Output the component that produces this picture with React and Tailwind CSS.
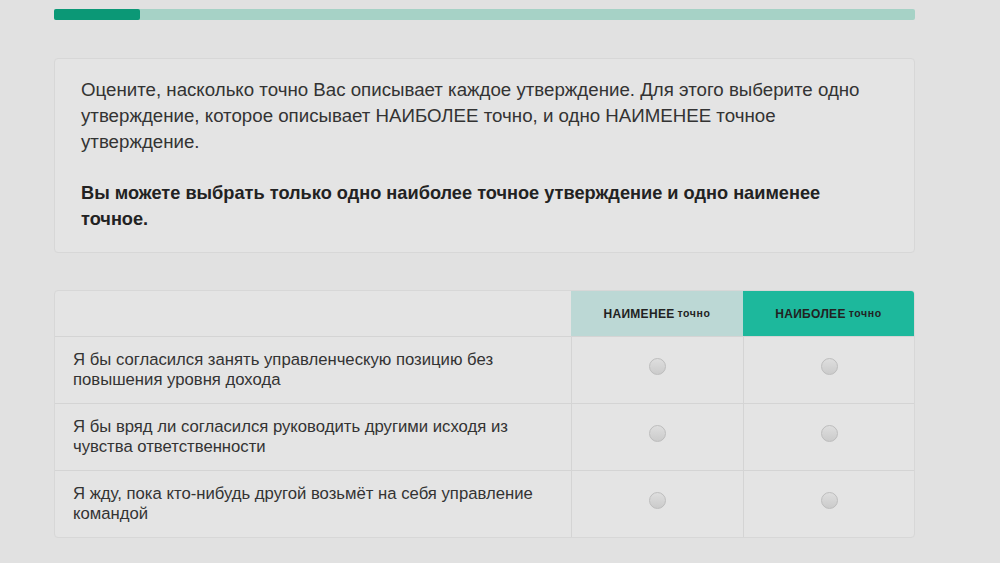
import React, { useState } from 'react';

const statements = [
  { id: 1, text: 'Я бы согласился занять управленческую позицию без повышения уровня дохода' },
  { id: 2, text: 'Я бы вряд ли согласился руководить другими исходя из чувства ответственности' },
  { id: 3, text: 'Я жду, пока кто-нибудь другой возьмёт на себя управление командой' },
];

const Radio = ({ checked, onClick }) => (
  <button
    type="button"
    onClick={onClick}
    className="w-[17px] h-[17px] rounded-full border border-[#bdbdbd] bg-gradient-to-b from-[#dedede] to-[#cbcbcb] flex items-center justify-center"
  >
    {checked && <span className="w-[7px] h-[7px] rounded-full bg-[#555]" />}
  </button>
);

const App = () => {
  const [least, setLeast] = useState(null);
  const [most, setMost] = useState(null);

  return (
    <div className="w-[1000px] h-[563px] overflow-hidden bg-[#e1e1e1] text-[#2b2b2b] [font-family:'Liberation_Sans',Arial,sans-serif]">
      <div className="w-[861px] ml-[54px] pt-[9px]">
        <div className="h-[11px] bg-[#a6d2c6] rounded-[2px] flex">
          <div className="w-[86px] bg-[#0b9876] rounded-[2px]" />
        </div>

        <div className="mt-[38px] bg-[#e4e4e4] border border-[#d7d7d7] rounded-[4px] pl-[26px] pr-[44px] pt-[18px] h-[195px]">
          <p className="text-[18.7px] leading-[26px] text-[#333]">
            Оцените, насколько точно Вас описывает каждое утверждение. Для этого выберите одно утверждение, которое описывает НАИБОЛЕЕ точно, и одно НАИМЕНЕЕ точное утверждение.
          </p>
          <p className="mt-[25px] text-[18.2px] leading-[26px] font-bold text-[#222]">
            Вы можете выбрать только одно наиболее точное утверждение и одно наименее точное.
          </p>
        </div>

        <div className="mt-[37px] bg-[#e4e4e4] border border-[#d7d7d7] rounded-[4px] overflow-hidden">
          <div className="grid grid-cols-[516px_172px_1fr] h-[45px]">
            <div />
            <div className="bg-[#bcd8d5] flex items-center justify-center font-bold text-[#222]">
              <span className="text-[12px] tracking-[0.3px]">НАИМЕНЕЕ</span>
              <span className="text-[10.5px] ml-[3px] tracking-[0.6px]">точно</span>
            </div>
            <div className="bg-[#1db89c] flex items-center justify-center font-bold text-[#222]">
              <span className="text-[12px] tracking-[0.3px]">НАИБОЛЕЕ</span>
              <span className="text-[10.5px] ml-[3px] tracking-[0.6px]">точно</span>
            </div>
          </div>
          {statements.map((s) => (
            <div key={s.id} className="grid grid-cols-[516px_172px_1fr] h-[67px] border-t border-[#d4d4d4]">
              <div className="pl-[18px] pr-[21px] flex items-center text-[16.7px] leading-[20px] text-[#333]">
                <span>{s.text}</span>
              </div>
              <div className="border-l border-[#d4d4d4] flex items-center justify-center pb-[8px]">
                <Radio checked={least === s.id} onClick={() => setLeast(s.id)} />
              </div>
              <div className="border-l border-[#d4d4d4] flex items-center justify-center pb-[8px]">
                <Radio checked={most === s.id} onClick={() => setMost(s.id)} />
              </div>
            </div>
          ))}
        </div>
      </div>
    </div>
  );
};

export default App;
